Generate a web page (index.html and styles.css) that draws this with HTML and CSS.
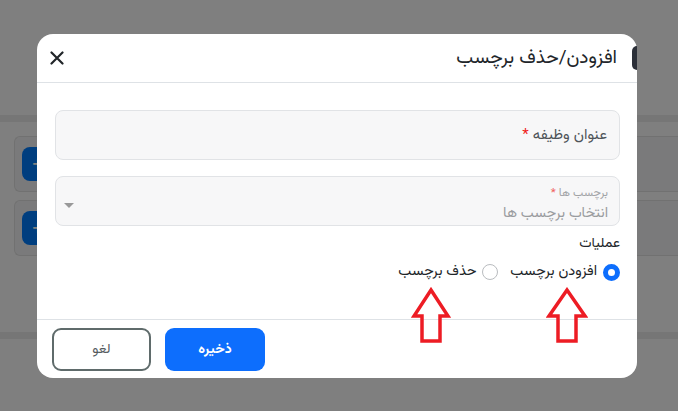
FILE: index.html
```html
<!DOCTYPE html>
<html lang="fa">
<head>
<meta charset="utf-8">
<title>افزودن/حذف برچسب</title>
<link rel="stylesheet" href="styles.css">
</head>
<body>
<div class="page">
  <div class="topbar"></div>
  <div class="band"></div>
  <div class="list">
    <div class="card"><span class="addbtn">+</span></div>
    <div class="card"><span class="addbtn">+</span></div>
  </div>
  <div class="band band-bottom"></div>
</div>
<div class="overlay">
  <div class="modal" dir="rtl">
    <span class="edge-tab"></span>
    <div class="modal-header">
      <h5 class="modal-title">افزودن/حذف برچسب</h5>
      <button class="close" type="button" aria-label="close">
        <svg width="14" height="14" viewBox="0 0 14 14"><path d="M1.5 1.5 L12.5 12.5 M12.5 1.5 L1.5 12.5" stroke="#212529" stroke-width="2.2" stroke-linecap="round"/></svg>
      </button>
    </div>
    <div class="modal-body">
      <div class="field field-title">
        <span class="field-label">عنوان وظیفه <span class="req">*</span></span>
      </div>
      <div class="field field-select">
        <div class="select-text">
          <span class="small-label">برچسب ها <span class="req">*</span></span>
          <span class="placeholder">انتخاب برچسب ها</span>
        </div>
        <span class="caret"></span>
      </div>
      <div class="ops-label">عملیات</div>
      <div class="radios">
        <label class="radio"><span class="dot checked"></span>افزودن برچسب</label>
        <label class="radio"><span class="dot"></span>حذف برچسب</label>
      </div>
    </div>
    <div class="modal-footer">
      <button class="btn btn-primary" type="button">ذخیره</button>
      <button class="btn btn-outline" type="button">لغو</button>
    </div>
    <svg class="arrow arrow-a" width="40" height="56" viewBox="0 0 40 56"><polygon points="20,3 37,29 29,29 29,54 11,54 11,29 3,29" fill="none" stroke="#ed1c24" stroke-width="3.5" stroke-linejoin="miter"/></svg>
    <svg class="arrow arrow-b" width="42" height="56" viewBox="0 0 42 56"><polygon points="21,3 39,29 30,29 30,54 12,54 12,29 3,29" fill="none" stroke="#ed1c24" stroke-width="3.5" stroke-linejoin="miter"/></svg>
  </div>
</div>
</body>
</html>
```
FILE: styles.css
```css
html, body {
  margin: 0;
  padding: 0;
}
body {
  width: 678px;
  height: 411px;
  overflow: hidden;
  position: relative;
  background: #ffffff;
  font-family: "Vazirmatn", "Noto Sans Arabic", "DejaVu Sans", sans-serif;
}
.page {
  display: flex;
  flex-direction: column;
  height: 411px;
}
.topbar {
  height: 115px;
  background: #ffffff;
}
.band {
  height: 7px;
  background: #ececec;
}
.list {
  display: flex;
  flex-direction: column;
  gap: 8px;
  padding: 14px 0 0 14px;
  height: 196px;
}
.card {
  height: 54px;
  border: 1px solid #e2e2e2;
  border-right: none;
  border-radius: 6px 0 0 6px;
  background: #f5f5f7;
  display: flex;
  align-items: center;
  padding-left: 7px;
}
.addbtn {
  width: 32px;
  height: 34px;
  border-radius: 8px;
  background: #007cff;
  color: #fff;
  font-size: 24px;
  display: flex;
  align-items: center;
  justify-content: center;
}
.band-bottom {
  margin-top: 0;
  height: 7px;
  background: #ececec;
}
.overlay {
  position: absolute;
  inset: 0;
  background: rgba(0, 0, 0, 0.5);
}
.modal {
  position: absolute;
  left: 37px;
  top: 34px;
  width: 600px;
  height: 344px;
  background: #fff;
  border-radius: 16px;
  display: flex;
  flex-direction: column;
  color: #212529;
}
.edge-tab {
  position: absolute;
  right: 0;
  top: 12px;
  width: 5px;
  height: 24px;
  background: #2b2f38;
  border-radius: 5px 0 0 5px;
}
.modal-header {
  height: 48px;
  border-bottom: 1px solid #dee2e6;
  display: flex;
  align-items: center;
  justify-content: space-between;
  padding: 0 20px 0 12px;
}
.modal-title {
  margin: 0;
  font-size: 19px;
  font-weight: 400;
  color: #212529;
}
.close {
  border: none;
  background: none;
  padding: 0;
  width: 16px;
  height: 16px;
  display: flex;
  align-items: center;
  justify-content: center;
}
.modal-body {
  flex: 1;
  padding: 27px 17px 0 18px;
  display: flex;
  flex-direction: column;
}
.field {
  background: #f7f7f8;
  border: 1px solid #e1e3e6;
  border-radius: 8px;
  box-sizing: border-box;
}
.field-title {
  height: 50px;
  display: flex;
  align-items: center;
  padding: 0 12px;
}
.field-label {
  font-size: 15px;
  color: #4e5458;
}
.req {
  color: #ef1a1a;
}
.field-select {
  margin-top: 16px;
  height: 50px;
  display: flex;
  align-items: center;
  justify-content: space-between;
  padding: 0 11px 0 8px;
}
.select-text {
  display: flex;
  flex-direction: column;
  gap: 5px;
  padding-top: 6px;
}
.small-label {
  font-size: 11.5px;
  color: #a1a3a6;
  line-height: 14px;
}
.small-label .req {
  color: #f06060;
}
.placeholder {
  font-size: 14.5px;
  color: #9a9c9f;
  line-height: 18px;
}
.caret {
  width: 0;
  height: 0;
  border-left: 5px solid transparent;
  border-right: 5px solid transparent;
  border-top: 5px solid #999;
  margin-top: 8px;
}
.ops-label {
  margin-top: 8px;
  font-size: 14px;
  line-height: 20px;
  color: #212529;
}
.radios {
  display: flex;
  gap: 4px;
  margin-top: 8px;
}
.radio {
  display: flex;
  align-items: center;
  gap: 6px;
  font-size: 14.5px;
  line-height: 20px;
  color: #212529;
  margin-left: 8px;
}
.dot {
  width: 16px;
  height: 16px;
  border-radius: 50%;
  border: 1px solid #b9bcbf;
  box-sizing: border-box;
  background: #fff;
}
.dot.checked {
  border: 5px solid #0d6efd;
  width: 17px;
  height: 17px;
}
.modal-footer {
  height: 59px;
  box-sizing: border-box;
  border-top: 1px solid #dee2e6;
  display: flex;
  justify-content: flex-end;
  align-items: flex-start;
  gap: 14px;
  padding: 8px 15px 0;
}
.btn {
  width: 100px;
  height: 43px;
  border-radius: 9px;
  font-family: inherit;
  font-size: 14px;
  cursor: pointer;
}
.btn-primary {
  background: #0d6efd;
  border: none;
  color: #fff;
  font-weight: 700;
}
.btn-outline {
  background: #fff;
  border: 2px solid #5f6b6b;
  color: #555b5e;
  width: 99px;
}
.arrow {
  position: absolute;
  top: 253px;
}
.arrow-a {
  left: 374px;
}
.arrow-b {
  left: 509px;
}
```
